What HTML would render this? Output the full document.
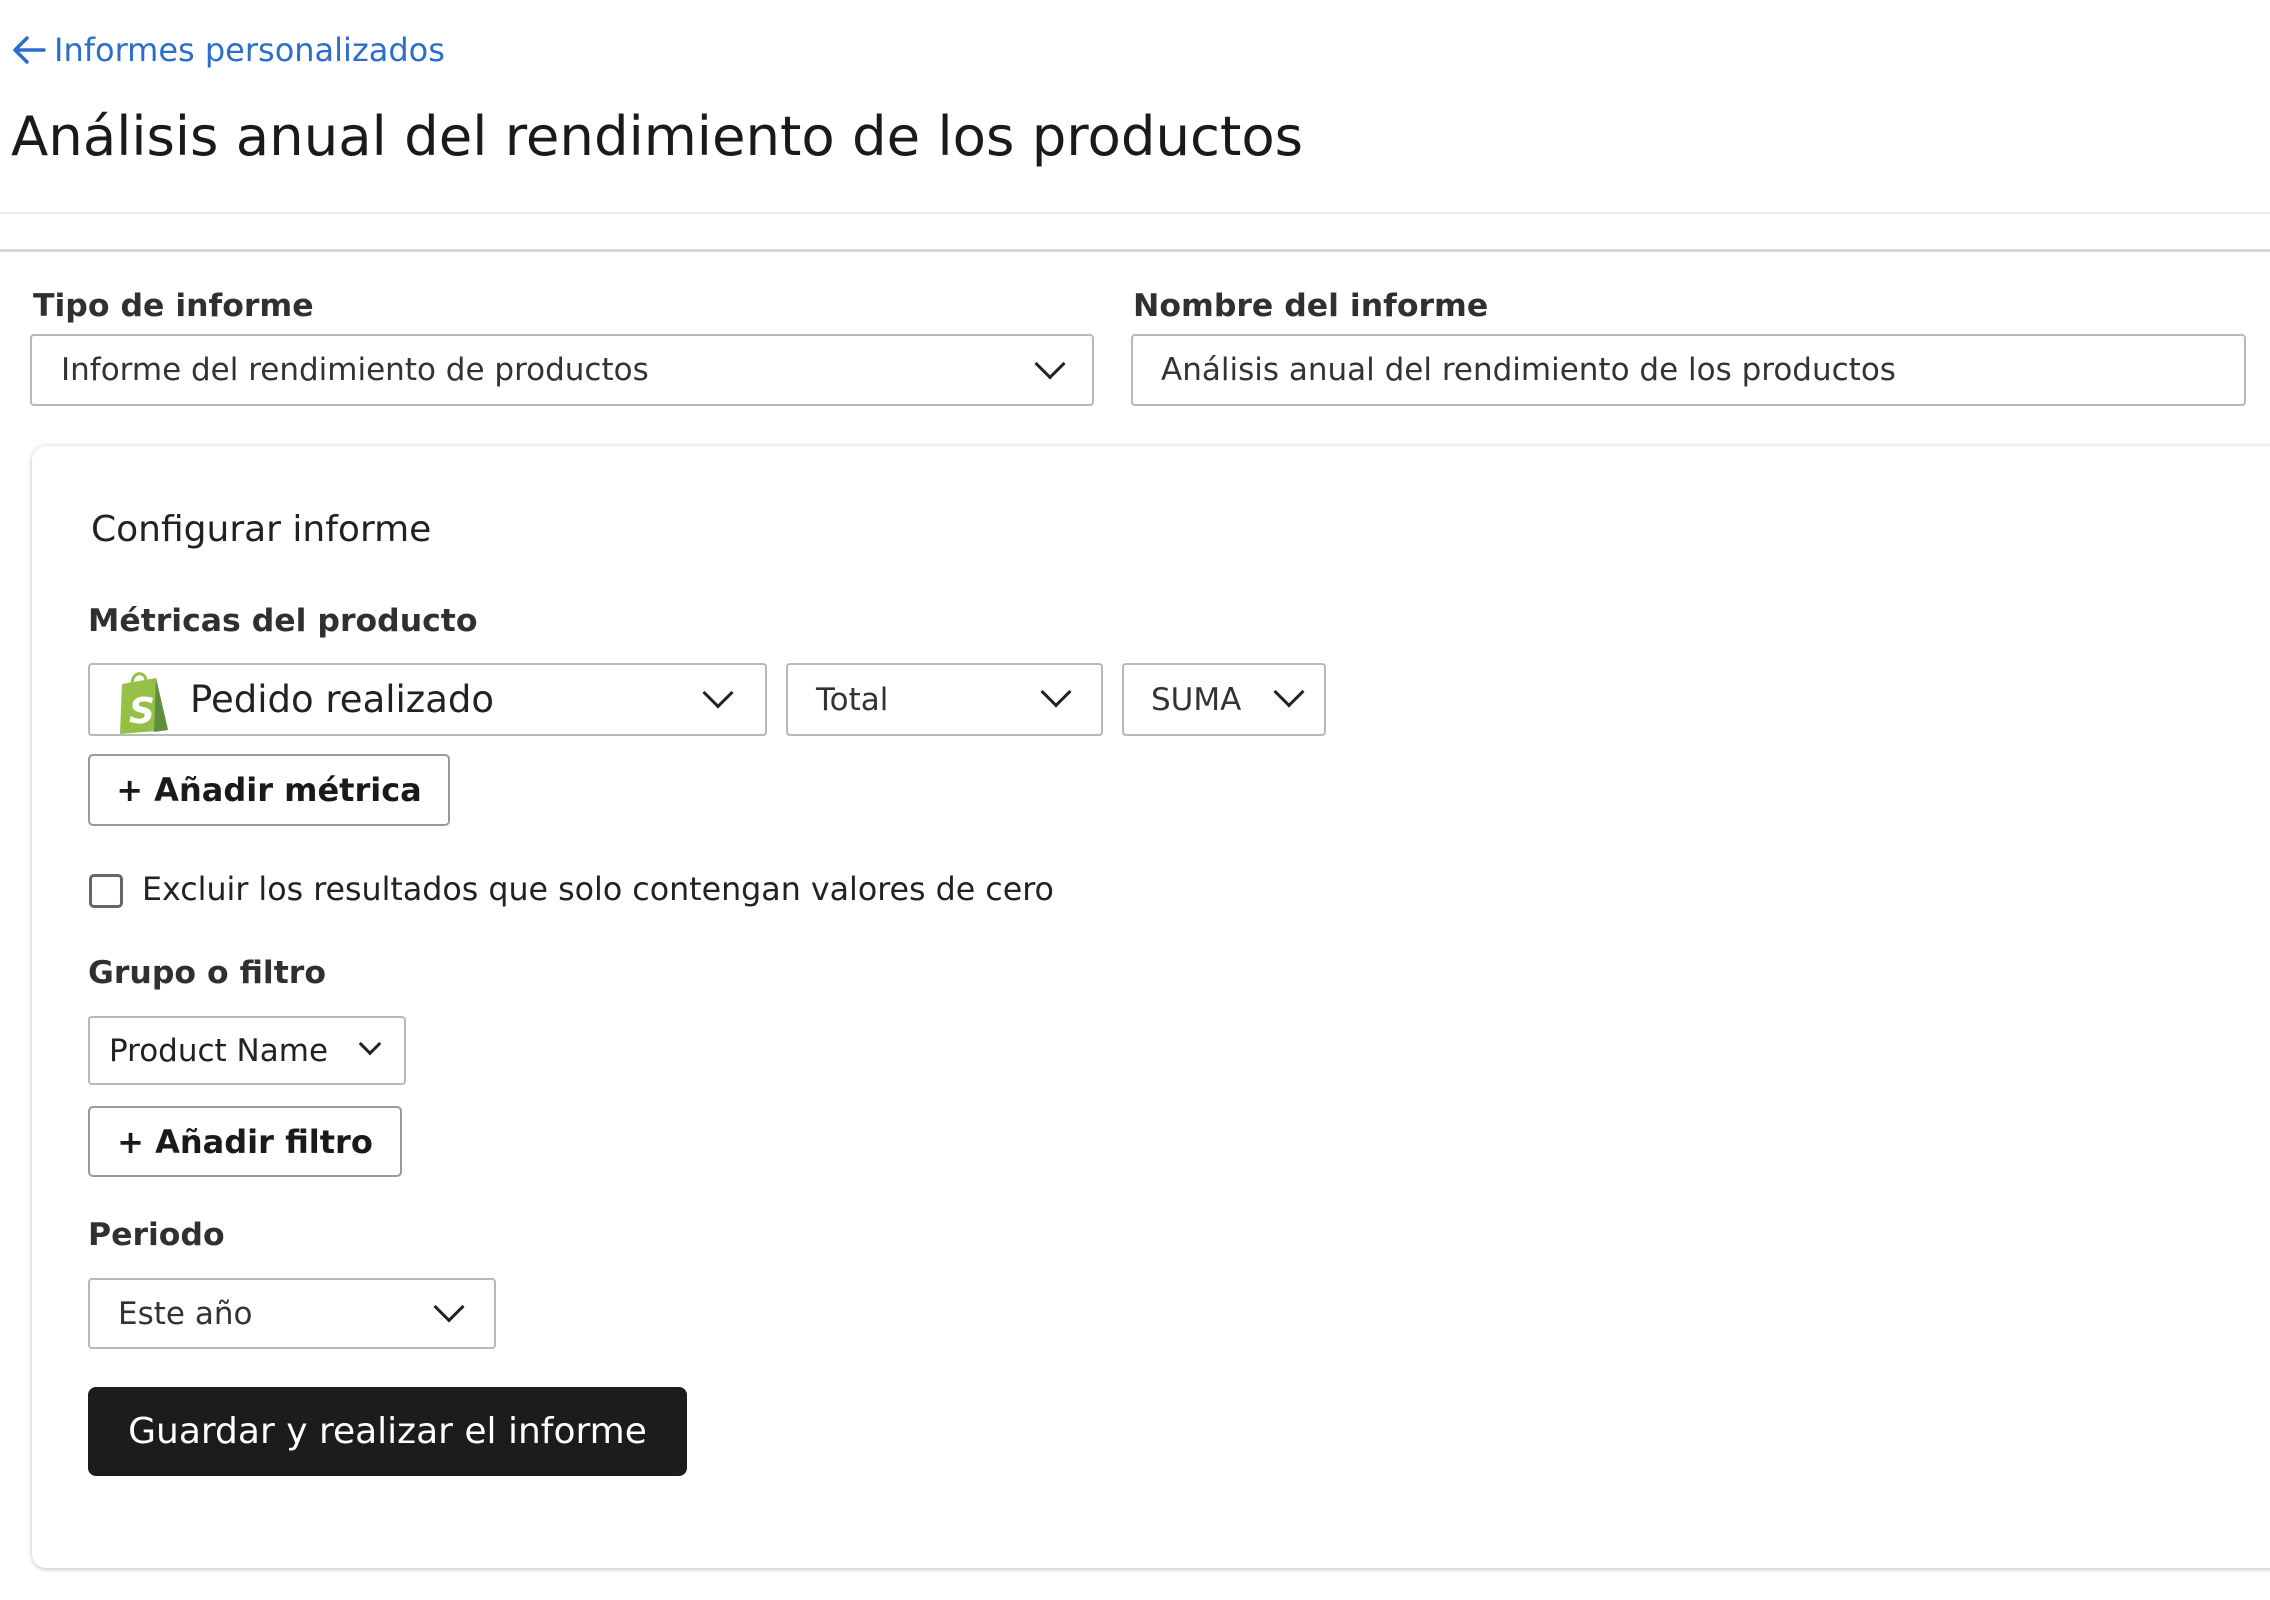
<!DOCTYPE html>
<html><head><meta charset="utf-8"><style>
*{box-sizing:border-box;margin:0;padding:0}
body{width:2270px;height:1600px;background:#fff;font-family:"DejaVu Sans","Liberation Sans",sans-serif;color:#222;position:relative;overflow:hidden}
.a{position:absolute}
.back{left:12px;top:31px;font-size:32px;color:#2c6ecb;white-space:nowrap;display:flex;align-items:center}
.title{left:11px;top:104px;font-size:54.5px;color:#1a1a1a;white-space:nowrap}
.hl1{left:0;top:212px;width:2270px;height:2px;background:#ececec}
.hl2{left:0;top:249px;width:2270px;height:3px;background:#d6d6d6}
.lbl{font-size:31.5px;font-weight:bold;color:#303030;white-space:nowrap}
.box{border:2px solid #b8b8b8;border-radius:4px;background:#fff;display:flex;align-items:center;font-size:31px;color:#333;white-space:nowrap}
.chev{position:absolute;width:22px;height:22px;border-right:3px solid #222;border-bottom:3px solid #222;transform:rotate(45deg)}
.card{left:32px;top:446px;width:2260px;height:1122px;border-radius:14px;box-shadow:0 0 6px rgba(0,0,0,.15),0 2px 4px rgba(0,0,0,.12);background:#fff}
.btn{border:2px solid #9a9a9a;border-radius:5px;font-weight:bold;font-size:32px;color:#1a1a1a;display:flex;align-items:center;justify-content:center;white-space:nowrap}
</style></head><body>
<div class="a back"><svg width="34" height="30" viewBox="0 0 34 30" style="margin-right:8px"><path d="M32 15 H4 M15 3 L3 15 L15 27" fill="none" stroke="#2c6ecb" stroke-width="3.5" stroke-linecap="round" stroke-linejoin="round"/></svg>Informes personalizados</div>
<div class="a title">Análisis anual del rendimiento de los productos</div>
<div class="a hl1"></div><div class="a hl2"></div>

<div class="a lbl" style="left:33px;top:288px">Tipo de informe</div>
<div class="a box" style="left:30px;top:334px;width:1064px;height:72px;padding-left:29px">Informe del rendimiento de productos<div class="chev" style="left:1007px;top:17px"></div></div>
<div class="a lbl" style="left:1133px;top:288px">Nombre del informe</div>
<div class="a box" style="left:1131px;top:334px;width:1115px;height:72px;padding-left:28px">Análisis anual del rendimiento de los productos</div>

<div class="a card"></div>
<div class="a" style="left:91px;top:509px;font-size:36px;color:#222;white-space:nowrap">Configurar informe</div>
<div class="a lbl" style="left:88px;top:603px">Métricas del producto</div>

<div class="a box" style="left:88px;top:663px;width:679px;height:73px;padding-left:100px;font-size:37px;color:#222">
<svg class="a" style="left:26px;top:5px" width="56" height="64" viewBox="0 0 56 64"><path d="M6 14 L40 8 L52 60 L4 64 Z" fill="#95bf47"/><path d="M40 8 L52 60 L38 62 Z" fill="#5e8e3e"/><path d="M16 14 C16 2 28 0 30 10" fill="none" stroke="#95bf47" stroke-width="3"/><text x="13" y="53" font-family="DejaVu Sans" font-weight="bold" font-style="italic" font-size="36" fill="#fff">S</text></svg>
Pedido realizado<div class="chev" style="left:617px;top:17px"></div></div>
<div class="a box" style="left:786px;top:663px;width:317px;height:73px;padding-left:28px">Total<div class="chev" style="left:257px;top:16px"></div></div>
<div class="a box" style="left:1122px;top:663px;width:204px;height:73px;padding-left:27px">SUMA<div class="chev" style="left:154px;top:16px"></div></div>

<div class="a btn" style="left:88px;top:754px;width:362px;height:72px">+ Añadir métrica</div>

<div class="a" style="left:89px;top:874px;width:34px;height:34px;border:3px solid #666;border-radius:5px"></div>
<div class="a" style="left:142px;top:872px;font-size:31.7px;color:#222;white-space:nowrap">Excluir los resultados que solo contengan valores de cero</div>

<div class="a lbl" style="left:88px;top:955px">Grupo o filtro</div>
<div class="a box" style="left:88px;top:1016px;width:318px;height:69px;padding-left:19px;color:#222">Product Name<div class="chev" style="left:272px;top:18px;width:16px;height:16px"></div></div>
<div class="a btn" style="left:88px;top:1106px;width:314px;height:71px">+ Añadir filtro</div>

<div class="a lbl" style="left:88px;top:1217px">Periodo</div>
<div class="a box" style="left:88px;top:1278px;width:408px;height:71px;padding-left:28px">Este año<div class="chev" style="left:348px;top:16px"></div></div>

<div class="a" style="left:88px;top:1387px;width:599px;height:89px;background:#1c1c1c;border-radius:8px;color:#fff;font-size:36px;display:flex;align-items:center;justify-content:center;white-space:nowrap">Guardar y realizar el informe</div>
</body></html>
